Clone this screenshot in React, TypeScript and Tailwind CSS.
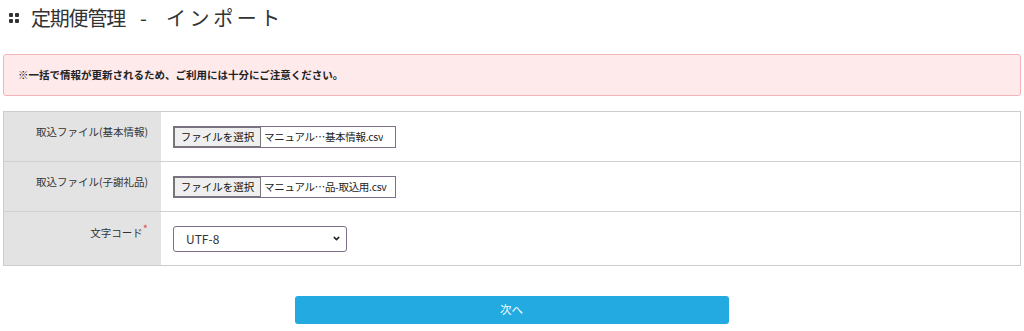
import { ChevronDown } from "lucide-react";

const jp = { fontFamily: '"Noto Sans CJK JP", "Noto Sans", sans-serif' };

function FileField({ name }: { name: string }) {
  return (
    <div className="flex h-[22px] w-[223px] items-stretch border border-[#7d6f8c] bg-white text-[10.5px] text-[#222] whitespace-nowrap">
      <span className="flex w-[87px] shrink-0 items-center justify-center border border-[#767676] bg-[#efefef] text-[#111]">
        ファイルを選択
      </span>
      <span className="flex items-center overflow-hidden pl-[3px] tracking-[-0.3px]">{name}</span>
    </div>
  );
}

function Row({
  label,
  required,
  last,
  children,
}: {
  label: string;
  required?: boolean;
  last?: boolean;
  children: React.ReactNode;
}) {
  return (
    <div className={`flex ${last ? "h-[53px]" : "h-[50px] border-b border-[#d0d0d0]"}`}>
      <div className="w-[157px] shrink-0 bg-[#e3e3e3] pr-[13px] pt-[12px] text-right text-[10.5px] leading-[16px] text-[#333]">
        {label}
        {required && <span className="relative -top-[4px] text-[11px] text-[#e05050]">*</span>}
      </div>
      <div className={`flex-1 pl-[12px] ${last ? "pt-[13px]" : "pt-[14px]"}`}>{children}</div>
    </div>
  );
}

export default function App() {
  return (
    <div className="w-[1024px] h-[331px] bg-white px-[3px]" style={jp}>
      <h1 className="flex h-[34px] items-center pl-[6px] pt-[1px] text-[20px] font-normal text-[#333] whitespace-nowrap">
        <span className="mr-[12px] grid grid-cols-2 gap-[2px]">
          <span className="h-[4px] w-[4px] rounded-[1px] bg-[#333]" />
          <span className="h-[4px] w-[4px] rounded-[1px] bg-[#333]" />
          <span className="h-[4px] w-[4px] rounded-[1px] bg-[#333]" />
          <span className="h-[4px] w-[4px] rounded-[1px] bg-[#333]" />
        </span>
        <span className="tracking-[-1.2px]">定期便管理</span>
        <span className="ml-[15px] mr-[19px]">-</span>
        <span className="tracking-[3.6px]">インポート</span>
      </h1>

      <div className="mt-[20px] flex h-[42px] items-center rounded-[3px] border border-[#f3b3b7] bg-[#fee9eb] pl-[14px] text-[10.5px] font-bold text-[#222]">
        ※一括で情報が更新されるため、ご利用には十分にご注意ください。
      </div>

      <div className="mt-[15px] border border-[#cccccc]">
        <Row label="取込ファイル(基本情報)">
          <FileField name="マニュアル…基本情報.csv" />
        </Row>
        <Row label="取込ファイル(子謝礼品)">
          <FileField name="マニュアル…品-取込用.csv" />
        </Row>
        <Row label="文字コード" required last>
          <div className="relative w-[174px]">
            <select
              defaultValue="UTF-8"
              className="h-[26px] w-full appearance-none rounded-[3px] border border-[#7d6f8c] bg-white pl-[12px] text-[12px] text-[#333]"
              style={jp}
            >
              <option>UTF-8</option>
              <option>Shift_JIS</option>
            </select>
            <ChevronDown
              className="pointer-events-none absolute right-[6px] top-[9px] h-[9px] w-[9px] text-[#222]"
              strokeWidth={4}
            />
          </div>
        </Row>
      </div>

      <div className="mt-[30px] flex justify-center">
        <button className="ml-[-1px] h-[28px] w-[434px] rounded-[3px] bg-[#22aae1] text-[11.5px] text-white">
          次へ
        </button>
      </div>
    </div>
  );
}
